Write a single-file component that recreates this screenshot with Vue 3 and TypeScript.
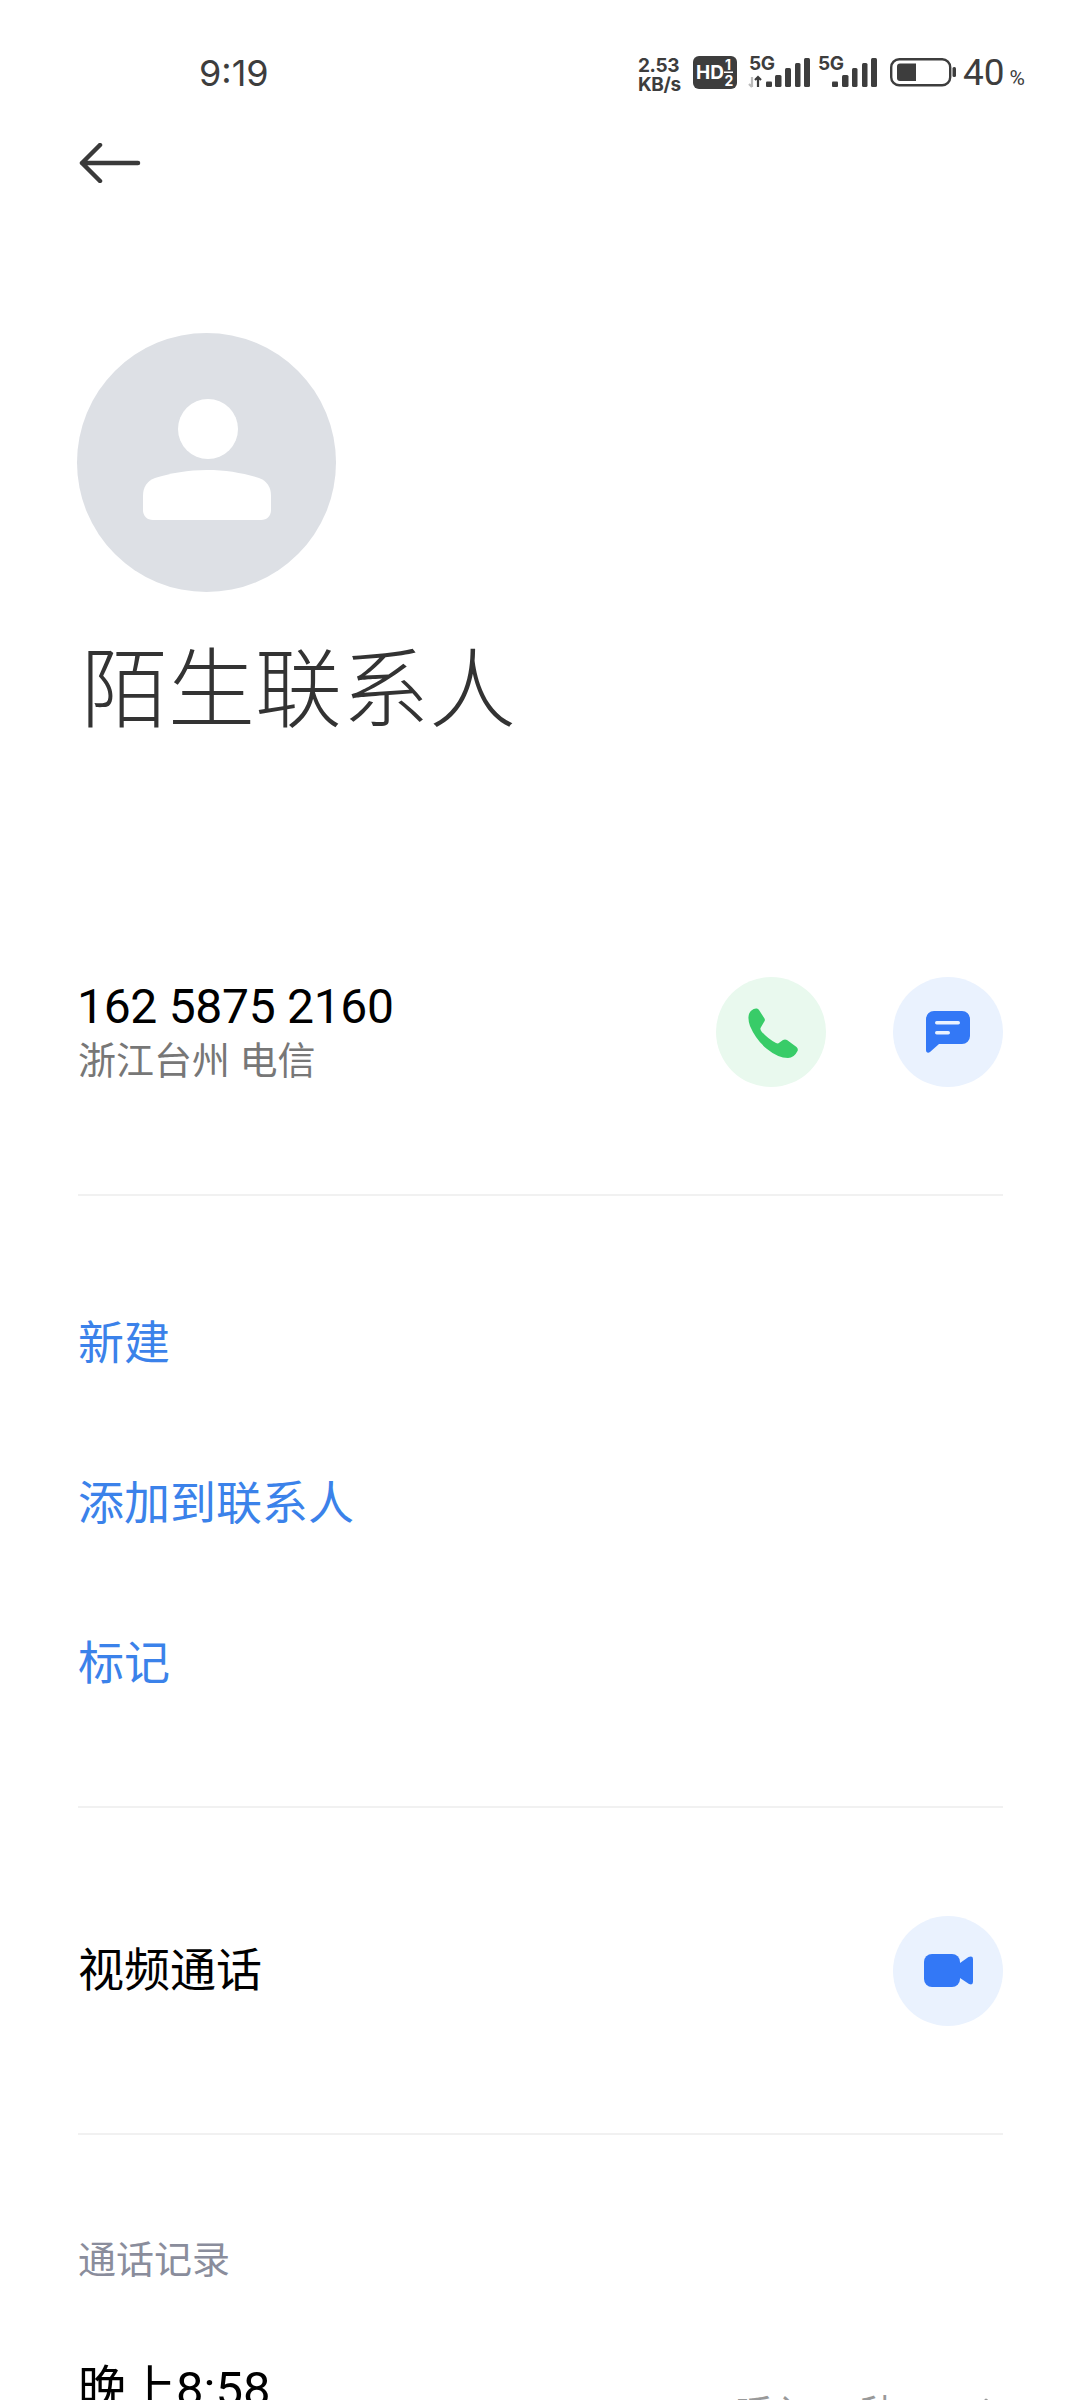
<template>
  <div class="page">
    <!-- 状态栏 -->
    <div class="status-bar">
      <span class="clock">9:19</span>
      <div class="status-icons">
        <div class="speed"><span>2.53</span><span>KB/s</span></div>
        <svg class="hd" width="44" height="33" viewBox="0 0 44 33">
          <rect width="44" height="33" rx="6" fill="#3d3d3d" />
          <text x="3" y="23" class="hd-text">HD</text>
          <text x="32" y="14" class="hd-small">1</text>
          <rect x="31" y="15.500" width="9" height="1.500" fill="#fff" />
          <text x="31.500" y="30" class="hd-small">2</text>
        </svg>
        <div class="signal first">
          <span class="five-g">5G</span>
          <svg width="62" height="33" viewBox="0 0 62 33">
            <path d="M4 21v10M1 28l3 3" stroke="#bbb" stroke-width="2.200" fill="none" />
            <path d="M10 31V21M7 24l3-3 3 3" stroke="#3d3d3d" stroke-width="2.200" fill="none" />
            <rect x="18" y="25.500" width="6" height="5.500" rx="1" fill="#3d3d3d" />
            <rect x="27" y="19" width="6.500" height="12" rx="1.500" fill="#3d3d3d" />
            <rect x="37" y="12" width="6" height="19" rx="1.500" fill="#3d3d3d" />
            <rect x="47" y="7" width="5.500" height="24" rx="1.500" fill="#3d3d3d" />
            <rect x="56" y="2" width="6" height="29" rx="1.500" fill="#3d3d3d" />
          </svg>
        </div>
        <div class="signal second">
          <span class="five-g">5G</span>
          <svg width="60" height="33" viewBox="0 0 60 33">
            <rect x="15" y="25.500" width="6" height="5.500" rx="1" fill="#3d3d3d" />
            <rect x="25" y="19" width="6.500" height="12" rx="1.500" fill="#3d3d3d" />
            <rect x="35" y="12" width="5.500" height="19" rx="1.500" fill="#3d3d3d" />
            <rect x="45" y="7" width="5.500" height="24" rx="1.500" fill="#3d3d3d" />
            <rect x="54" y="2" width="6" height="29" rx="1.500" fill="#3d3d3d" />
          </svg>
        </div>
        <svg class="battery" width="66" height="33" viewBox="0 0 66 33">
          <rect x="1.200" y="3.200" width="59" height="26" rx="8" fill="none" stroke="#3d3d3d" stroke-width="2.400" />
          <path d="M10 7.500h16v17.500H10a3 3 0 0 1-3-3V10.500a3 3 0 0 1 3-3z" fill="#3d3d3d" />
          <rect x="62.500" y="11" width="3.500" height="10" rx="1.500" fill="#3d3d3d" />
        </svg>
        <span class="level">40<small>%</small></span>
      </div>
    </div>

    <button class="back" type="button" aria-label="返回">
      <svg width="62" height="40" viewBox="0 0 62 40" fill="none" stroke="#3a3a3a" stroke-width="4.500" stroke-linecap="round" stroke-linejoin="round">
        <path d="M59 20H3M21 2 3 20l18 18" />
      </svg>
    </button>

    <!-- 头像和名称 -->
    <div class="avatar">
      <svg width="130" height="125" viewBox="0 0 130 125" fill="#fff">
        <circle cx="66" cy="30" r="30" />
        <path d="M1 97c0-9 4-15 12-18 16-5 33-8 52-8s36 3 52 8c8 3 12 9 12 18v14c0 6-4 10-10 10H11c-6 0-10-4-10-10z" />
      </svg>
    </div>
    <h1 class="name">陌生联系人</h1>

    <!-- 号码 -->
    <section class="number-row">
      <div class="number-info">
        <div class="number">162 5875 2160</div>
        <div class="location">浙江台州 电信</div>
      </div>
      <div class="actions">
        <button class="round green" type="button" aria-label="拨打">
          <svg class="phone" width="50" height="50" viewBox="0 0 50 50">
            <path d="M1 6Q3 1 8 .5q2-.5 3 1.500l5.500 8.500q1 2-.5 3.500l-3.500 6q-.5 1.500 1 3.500Q20 31 28 35q2 1 3.500-.5L35 32q2-1 4 0l9.500 7q2 2 1 4Q46 50 40 50 30 50 19 41 8 32 2 18-.5 11 1 6z" fill="#38cc68" />
          </svg>
        </button>
        <button class="round blue" type="button" aria-label="短信">
          <svg width="44" height="42" viewBox="0 0 44 42">
            <path d="M8 0h28a8 8 0 0 1 8 8v17a8 8 0 0 1-8 8H13L4 41c-2 1.500-4 .5-4-2V8a8 8 0 0 1 8-8z" fill="#3378f6" />
            <rect x="9" y="10" width="25" height="3.500" rx="1.700" fill="#eaf2ff" />
            <rect x="9" y="20" width="15" height="3.500" rx="1.700" fill="#eaf2ff" />
          </svg>
        </button>
      </div>
    </section>

    <div class="divider first"></div>

    <!-- 操作列表 -->
    <ul class="link-list">
      <li v-for="item in links" :key="item">{{ item }}</li>
    </ul>

    <div class="divider"></div>

    <section class="video-row">
      <span class="video-label">视频通话</span>
      <button class="round blue" type="button" aria-label="视频通话">
        <svg width="49" height="33" viewBox="0 0 49 33">
          <path d="M8 0h20a8 8 0 0 1 8 8v17a8 8 0 0 1-8 8H8a8 8 0 0 1-8-8V8a8 8 0 0 1 8-8z" fill="#3378f6" />
          <path d="M36 9l8.500-6q4.500-1.500 4.500 2v23q0 3.500-4 2l-9-6z" fill="#3378f6" />
        </svg>
      </button>
    </section>

    <div class="divider"></div>

    <!-- 通话记录 -->
    <section class="history">
      <div class="history-title">通话记录</div>
      <div class="history-row">
        <span class="history-time">晚上8:58</span>
        <div class="history-meta">
          <span>呼入 10秒</span>
          <i class="sim"></i>
          <svg width="20" height="34" viewBox="0 0 20 34" fill="none" stroke="#999" stroke-width="3" stroke-linecap="round" stroke-linejoin="round">
            <path d="M3 2l15 15L3 32" />
          </svg>
        </div>
      </div>
    </section>
  </div>
</template>

<script setup lang="ts">
const links: string[] = ['新建', '添加到联系人', '标记']
</script>

<style>
html,
body {
  margin: 0;
  background: #fff;
}
</style>

<style scoped>
.page {
  width: 1080px;
  height: 2400px;
  overflow: hidden;
  background: #fff;
  font-family: 'Roboto', 'Noto Sans CJK SC', sans-serif;
  color: #000;
}

/* 状态栏 */
.status-bar {
  height: 88px;
  padding: 53px 55px 0 199px;
  box-sizing: border-box;
  display: flex;
  justify-content: space-between;
  align-items: flex-start;
}

.clock {
  font-size: 36px;
  line-height: 40px;
  color: #3d3d3d;
  font-family: 'Inter', sans-serif;
}

.status-icons {
  display: flex;
  align-items: flex-start;
  margin-top: 3px;
  color: #3d3d3d;
}

.speed {
  display: flex;
  flex-direction: column;
  width: 47px;
  font-size: 19px;
  line-height: 19px;
  font-weight: 700;
  font-family: 'Inter', sans-serif;
  letter-spacing: -0.4px;
  white-space: nowrap;
}

.hd {
  margin-left: 8px;
}

.hd-text {
  font: 700 19px 'Inter', sans-serif;
  fill: #fff;
}

.hd-small {
  font: 700 14px 'Inter', sans-serif;
  fill: #fff;
}

.signal {
  position: relative;
  display: flex;
}

.signal.first {
  margin-left: 11px;
}

.signal.second {
  margin-left: 7px;
}

.five-g {
  position: absolute;
  left: 1px;
  top: -2px;
  font: 700 19px/20px 'Inter', sans-serif;
  letter-spacing: -0.5px;
}

.battery {
  margin-left: 13px;
}

.level {
  margin: -3px 0 0 7px;
  font-size: 37px;
  line-height: 40px;
  white-space: nowrap;
}

.level small {
  font-size: 21px;
  margin-left: 5px;
}

.back {
  display: block;
  margin: 55px 0 0 79px;
  padding: 0;
  border: 0;
  background: none;
  height: 40px;
}

.back svg {
  display: block;
}

/* 头像 */
.avatar {
  width: 259px;
  height: 259px;
  margin: 150px 0 0 77px;
  border-radius: 50%;
  background: #dde0e5;
  display: flex;
  align-items: center;
  justify-content: center;
}

.avatar svg {
  margin-bottom: 3px;
}

.name {
  margin: 41px 0 0 81px;
  font-size: 87px;
  line-height: 100px;
  font-weight: 300;
  color: #333;
  font-family: 'Noto Sans CJK SC', sans-serif;
}

/* 号码行 */
.number-row {
  margin: 244px 77px 0 78px;
  display: flex;
  justify-content: space-between;
  align-items: center;
}

.number {
  margin-left: -1px;
  font-size: 48px;
  line-height: 58px;
  letter-spacing: -0.3px;
}

.location {
  font-size: 38px;
  line-height: 50px;
  color: #777;
}

.actions {
  display: flex;
  gap: 67px;
}

.round {
  width: 110px;
  height: 110px;
  border: 0;
  padding: 0;
  border-radius: 50%;
  display: flex;
  align-items: center;
  justify-content: center;
}

.green {
  background: #e9f9ee;
}

.blue {
  background: #eaf2fe;
}

.phone {
  margin: 2px 0 0 3px;
}

.divider {
  height: 2px;
  margin: 0 77px 0 78px;
  background: #f1f1f1;
}

.divider.first {
  margin-top: 107px;
}

/* 操作列表 */
.link-list {
  list-style: none;
  margin: 0;
  padding: 63px 78px 67px;
}

.link-list li {
  height: 160px;
  display: flex;
  align-items: center;
  font-size: 46px;
  color: #3b82ea;
  font-family: 'Noto Sans CJK SC', sans-serif;
}

.video-row {
  height: 325px;
  box-sizing: border-box;
  padding: 0 77px 0 78px;
  display: flex;
  align-items: center;
  justify-content: space-between;
  font-size: 46px;
  font-family: 'Noto Sans CJK SC', sans-serif;
}

.video-label {
  margin-bottom: 10px;
}

/* 通话记录 */
.history {
  padding: 96px 77px 0 78px;
}

.history-title {
  font-size: 38px;
  line-height: 52px;
  color: #8a8d9c;
  font-family: 'Noto Sans CJK SC', sans-serif;
}

.history-row {
  margin-top: 77px;
  display: flex;
  justify-content: space-between;
  align-items: flex-start;
}

.history-time {
  font-size: 49px;
  line-height: 60px;
}

.history-meta {
  margin-top: 30px;
  display: flex;
  align-items: center;
  font-size: 37px;
  line-height: 50px;
  color: #999;
}

.sim {
  width: 24px;
  height: 30px;
  margin: 0 38px 0 24px;
  border-radius: 6px;
  background: #d9d9d9;
}
</style>
